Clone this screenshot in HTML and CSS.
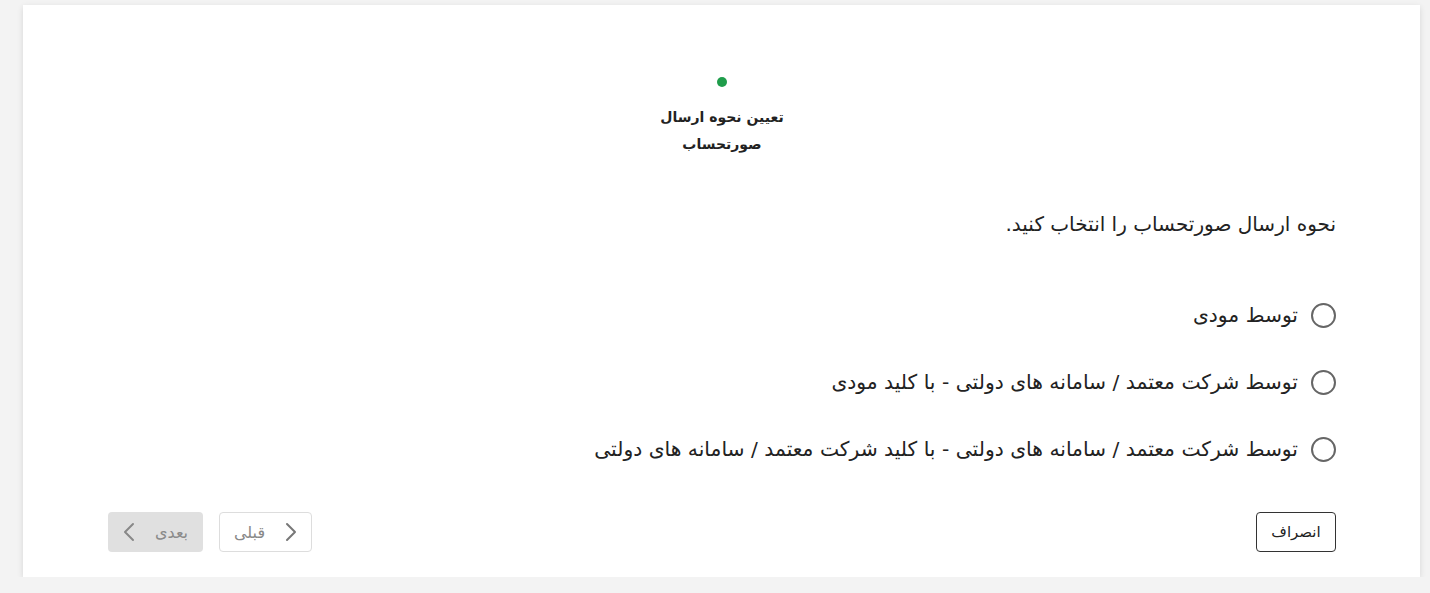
FILE: index.html
```html
<!DOCTYPE html>
<html lang="fa" dir="rtl">
<head>
<meta charset="utf-8">
<title>تعیین نحوه ارسال صورتحساب</title>
<link rel="stylesheet" href="styles.css">
</head>
<body>
<div class="page">
  <div class="card">
    <div class="stepper">
      <div class="step">
        <span class="dot"></span>
        <div class="step-label">تعیین نحوه ارسال<br>صورتحساب</div>
      </div>
    </div>
    <p class="question">نحوه ارسال صورتحساب را انتخاب کنید.</p>
    <div class="options">
      <label class="option"><span class="radio"></span><span class="opt-text">توسط مودی</span></label>
      <label class="option"><span class="radio"></span><span class="opt-text">توسط شرکت معتمد / سامانه های دولتی - با کلید مودی</span></label>
      <label class="option"><span class="radio"></span><span class="opt-text">توسط شرکت معتمد / سامانه های دولتی - با کلید شرکت معتمد / سامانه های دولتی</span></label>
    </div>
    <div class="actions">
      <button class="btn btn-cancel">انصراف</button>
      <div class="nav">
        <button class="btn btn-prev"><svg class="chev" viewBox="0 0 12 20" width="12" height="20"><path d="M2 2 L10 10 L2 18" fill="none" stroke="#777" stroke-width="2" stroke-linecap="round" stroke-linejoin="round"/></svg><span>قبلی</span></button>
        <button class="btn btn-next"><span>بعدی</span><svg class="chev" viewBox="0 0 12 20" width="12" height="20"><path d="M10 2 L2 10 L10 18" fill="none" stroke="#888" stroke-width="2" stroke-linecap="round" stroke-linejoin="round"/></svg></button>
      </div>
    </div>
  </div>
</div>
</body>
</html>
```

FILE: styles.css
```css
* { box-sizing: border-box; }
html, body { margin: 0; padding: 0; }
body {
  background: #f3f3f3;
  font-family: "DejaVu Sans", "Noto Sans", sans-serif;
  color: #222;
}
.page {
  padding: 5px 10px 0 23px;
}
.card {
  background: #fff;
  height: 572px;
  box-shadow: 0 2px 6px rgba(0,0,0,0.12);
  padding: 0 84px 0 85px;
  display: flex;
  flex-direction: column;
}
.stepper {
  display: flex;
  justify-content: center;
  padding-top: 72px;
}
.step {
  display: flex;
  flex-direction: column;
  align-items: center;
}
.dot {
  width: 10px;
  height: 10px;
  border-radius: 50%;
  background: #1f9d4b;
}
.step-label {
  margin-top: 17px;
  font-size: 14px;
  font-weight: bold;
  line-height: 27px;
  text-align: center;
  color: #222;
}
.question {
  margin: 52px 0 0;
  font-size: 20px;
  line-height: 28px;
  color: #222;
}
.options {
  margin-top: 61px;
  display: flex;
  flex-direction: column;
  gap: 35px;
}
.option {
  display: flex;
  align-items: center;
  gap: 13px;
  height: 32px;
  font-size: 20.3px;
  color: #222;
  cursor: pointer;
}
.radio {
  width: 25px;
  height: 25px;
  border: 2px solid #666;
  border-radius: 50%;
  flex: none;
}
.actions {
  margin-top: 47px;
  display: flex;
  justify-content: space-between;
  align-items: center;
}
.nav {
  display: flex;
  gap: 16px;
}
.btn {
  height: 40px;
  border-radius: 4px;
  font-family: inherit;
  font-size: 16px;
  display: flex;
  align-items: center;
  justify-content: center;
  gap: 20px;
  cursor: pointer;
}
.btn-cancel {
  width: 80px;
  border: 1px solid #333;
  background: #fff;
  color: #222;
  font-size: 15px;
}
.btn-prev {
  width: 93px;
  border: 1px solid #ddd;
  background: #fff;
  color: #888;
}
.btn-next {
  width: 95px;
  border: none;
  background: #e0e0e0;
  color: #8a8a8a;
}
.chev { flex: none; }
```
